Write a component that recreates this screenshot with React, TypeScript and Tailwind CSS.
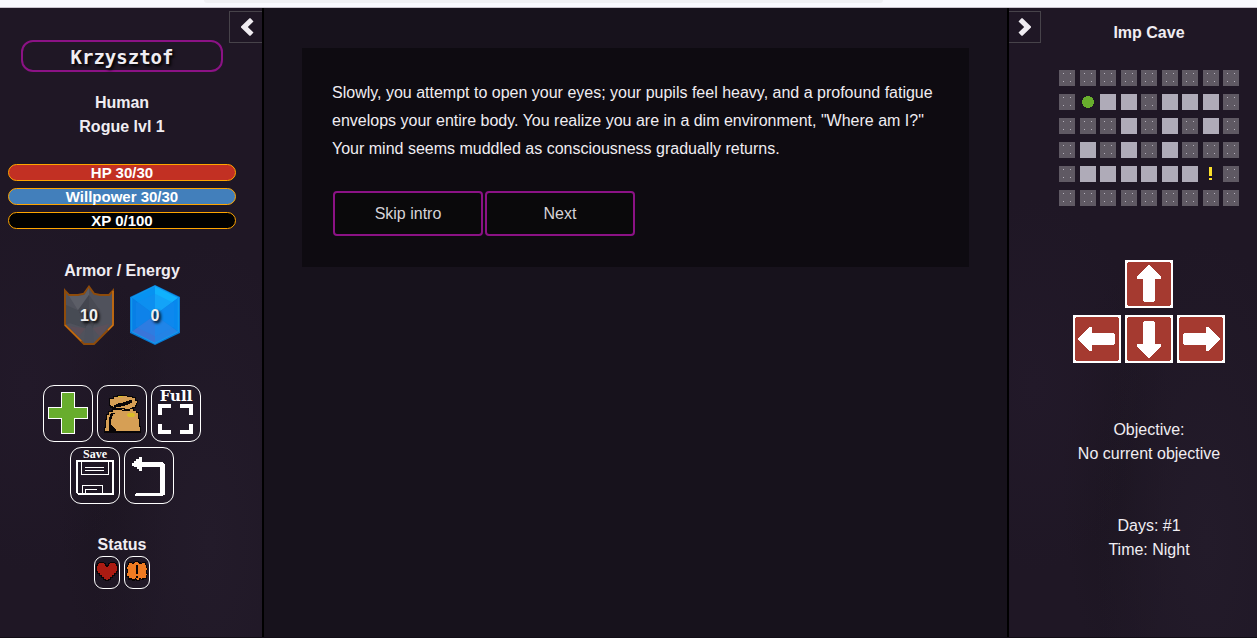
import React from "react";

const WALL = "#";
const FLOOR = ".";
const PLAYER = "@";
const EVENT = "!";

const MAP = [
  "#########",
  "#@..#...#",
  "###.#.#.#",
  "#.#.#.###",
  "#......!#",
  "#########",
];

const PANEL =
  "bg-[#1f1725] bg-[radial-gradient(ellipse_at_80%_85%,#231b2a_0%,transparent_40%),radial-gradient(ellipse_at_10%_60%,#221929_0%,transparent_35%),radial-gradient(ellipse_at_45%_75%,#1c1521_0%,transparent_30%)]";

function Tile({ kind }: { kind: string }) {
  return (
    <svg viewBox="0 0 16 16" className="size-4 shrink-0" aria-hidden="true" shapeRendering="crispEdges">
      {kind === WALL && (
        <>
          <rect width="16" height="16" fill="#5f5963" />
          <path d="M4 3h1v1h-1zM11 3h1v1h-1zM4 11h1v1h-1zM11 11h1v1h-1z" fill="#b5b1bb" />
        </>
      )}
      {kind === FLOOR && <rect width="16" height="16" fill="#afabb8" />}
      {kind === PLAYER && (
        <path d="M6 2h4v1h2v1h1v2h1v4h-1v2h-1v1h-2v1H6v-1H4v-1H3v-2H2V6h1V4h1V3h2z" fill="#68ad2d" />
      )}
      {kind === EVENT && <path d="M6.4 1h2.2v9H6.4zM6.4 12h2.2v2H6.4z" fill="#fbe02b" />}
    </svg>
  );
}

function StatBar({ text, fill }: { text: string; fill: string }) {
  return (
    <div
      className={`h-[17px] rounded-full border border-[#ffa500] text-center text-[15px] leading-4 font-bold text-white ${fill}`}
    >
      {text}
    </div>
  );
}

function ActionButton({ label, children }: { label: string; children: React.ReactNode }) {
  return (
    <button
      aria-label={label}
      className="h-[57px] w-[50px] cursor-pointer overflow-hidden rounded-[11px] border border-white"
    >
      <svg viewBox="3 3 144 165" className="h-[55px] w-12" shapeRendering="crispEdges">
        {children}
      </svg>
    </button>
  );
}

function MoveButton({ label, turn }: { label: string; turn: number }) {
  return (
    <button aria-label={label} className="size-12 cursor-pointer">
      <svg viewBox="0 0 48 48" className="size-12" shapeRendering="crispEdges">
        <rect width="48" height="48" fill="#fff" />
        <path d="M3 2h42v1h1v42h-1v1H3v-1H2V3h1z" fill="#a53a30" />
        <path
          d="M23 5h2v1h1v1h1v1h1v1h1v1h1v1h1v1h1v1h1v1h1v1h1v1h1v3h-6v22h-1v1H19v-1h-1V19h-6v-3h1v-1h1v-1h1v-1h1v-1h1v-1h1v-1h1V9h1V8h1V7h1V6h1z"
          fill="#fff"
          transform={`rotate(${turn} 24 24)`}
        />
      </svg>
    </button>
  );
}

function Shield() {
  return (
    <svg viewBox="0 0 150 180" className="absolute inset-0 h-[60px] w-[50px]" aria-hidden="true">
      <path
        d="M3 17 15 30H42L60 26 75 5 90 26 108 30H135L147 17V120L90 177H60L3 120Z"
        fill="#50525c"
        stroke="#8e4b0a"
        strokeWidth="6"
      />
      <path d="M75 8V30L42 76 15 33H44L62 29Z" fill="#5c5e67" />
      <path d="M75 30 42 76 64 130 75 112Z" fill="#44464f" />
      <path d="M75 30 108 76 86 130 75 112Z" fill="#494b54" />
      <path d="M6 60 42 76 64 130 18 115 6 118Z" fill="#474b54" />
      <path d="M64 130 44 156 14 124Z" fill="#5b4e58" />
      <path d="M86 130 108 156 136 116Z" fill="#5b505a" />
      <path d="M64 130 75 112 86 130 90 174H60Z" fill="#4d505b" />
      <path d="M147 18V120L132 135" fill="none" stroke="#d17516" strokeWidth="4" />
      <path d="M3 120 52 168" fill="none" stroke="#c56c12" strokeWidth="4" />
    </svg>
  );
}

function Crystal() {
  return (
    <svg viewBox="0 0 150 180" className="absolute inset-0 h-[60px] w-[50px]" aria-hidden="true">
      <path d="M75 0 150 36V144L75 180 0 144V36Z" fill="#0878d8" />
      <path d="M75 3 5 38 75 90Z" fill="#0792f1" />
      <path d="M75 3 145 38 75 90Z" fill="#10b1fd" />
      <path d="M5 38V140L75 90Z" fill="#087fe6" />
      <path d="M145 38V140L75 90Z" fill="#0788ee" />
      <path d="M5 140 75 175 75 90Z" fill="#3975da" />
      <path d="M145 140 75 175 75 90Z" fill="#2483e5" />
      <path d="M75 26 132 54V126L75 154 18 126V54Z" fill="#1989ee" opacity=".35" />
      <path d="M75 3 145 38V140L75 175 5 140V38Z" fill="none" stroke="#129eed" strokeWidth="3" />
    </svg>
  );
}

function Badge({ value, children }: { value: number; children: React.ReactNode }) {
  return (
    <div className="relative flex h-[60px] w-[50px] items-center justify-center pt-0.5">
      {children}
      <span className="relative font-bold text-[#f0f0f0] [text-shadow:2px_2px_3px_#000]">{value}</span>
    </div>
  );
}

function Chevron({ flip }: { flip?: boolean }) {
  return (
    <svg viewBox="0 0 16 20" className="h-5 w-4" aria-hidden="true">
      <path
        d={
          flip
            ? "M1.5 4.5 4.5 1.3 5.5 1.3 14 9.4V10.6L5.5 18.7H4.5L1.5 15.5 7.2 10Z"
            : "M15.5 4.5 12.5 1.3 11.5 1.3 3 9.4V10.6L11.5 18.7H12.5L15.5 15.5 9.8 10Z"
        }
        fill="#f0edf2"
      />
    </svg>
  );
}

function CharacterPanel() {
  return (
    <aside className={`flex w-[264px] shrink-0 items-start border-r-2 border-black ${PANEL}`}>
      <div className="relative w-[244px] shrink-0 pt-8 text-center">
        <h1 className="mx-[21px] h-8 rounded-xl border-2 border-[#8b1285] font-['DejaVu_Sans_Mono',monospace] text-[19px] leading-[30px] font-bold [text-shadow:2px_2px_3px_#000]">
          Krzysztof
        </h1>
        <div className="mt-[19px] font-bold">
          <p>Human</p>
          <p>Rogue lvl 1</p>
        </div>
        <div className="mx-2 mt-[25px] flex flex-col gap-[7px]">
          <StatBar text="HP 30/30" fill="bg-[#c23023]" />
          <StatBar text="Willpower 30/30" fill="bg-[#427fbb]" />
          <StatBar text="XP 0/100" fill="bg-black" />
        </div>
        <h2 className="mt-[30px] font-bold">Armor / Energy</h2>
        <div className="mt-0.5 flex justify-center gap-4">
          <Badge value={10}>
            <Shield />
          </Badge>
          <Badge value={0}>
            <Crystal />
          </Badge>
        </div>
        <div className="mx-auto mt-10 flex w-40 flex-wrap justify-center gap-x-1 gap-y-[5px]">
          <ActionButton label="Level up">
            <path d="M54 21H96V66H135V102H96V146H54V102H15V66H54Z" fill="#fff" />
            <path d="M57 24H93V69H132V99H93V143H57V99H18V69H57Z" fill="#68ad2d" />
          </ActionButton>
          <ActionButton label="Inventory">
            <path
              d="M48 33H60V30H90V33H108V36H117V45H123V54H120V63H117V69H111V75H114V78H120V81H126V99H129V123H132V144H21V126H24V102H27V87H33V78H42V75H45V69H39V63H36V39H48Z"
              fill="#080507"
            />
            <path
              d="M51 36H63V33H90V36H105V39H114V48H120V54H117V60H114V66H105V69H99V72H84V69H57V66H48V63H42V60H39V42H51Z"
              fill="#d69f55"
            />
            <path
              d="M48 72H81V75H99V72H108V78H117V84H123V102H126V126H129V138H57V135H54V132H51V129H48V126H45V120H42V102H45V93H48V87H54V84H42V87H39V96H36V138H24V129H27V105H30V90H36V81H48Z"
              fill="#d69f55"
            />
            <path d="M36 138V96H39V87H45V84H54V87H48V93H45V102H42V120H45V123H48V126H51V129H54V132H57V138Z" fill="#080507" />
            <path d="M48 69H57V72H75V75H99V78H75V75H48Z" fill="#080507" />
            <path d="M51 60H57V57H63V54H78V51H87V48H96V45H105V54H99V57H93V60H84V63H72V66H51Z" fill="#080507" />
            <path d="M63 33H78V36H63ZM93 84H111V87H114V93H111V96H93V93H90V87H93Z" fill="#d9bd28" />
          </ActionButton>
          <ActionButton label="Full screen">
            <text
              x="75"
              y="47"
              fill="#fff"
              fontSize="45"
              fontWeight="700"
              fontFamily="DejaVu Serif, serif"
              textAnchor="middle"
            >
              Full
            </text>
            <path
              d="M21 57H60V69H33V90H21ZM87 57H126V90H114V69H87ZM21 117H33V135H60V147H21ZM114 117H126V147H87V135H114Z"
              fill="#fff"
            />
          </ActionButton>
          <ActionButton label="Save">
            <text
              x="75"
              y="33"
              fill="#fff"
              fontSize="36"
              fontWeight="700"
              fontFamily="Liberation Serif, serif"
              textAnchor="middle"
            >
              Save
            </text>
            <path
              d="M18 39H132V144H24V141H21V138H18ZM24 45V138H126V45Z"
              fill="#fff"
              fillRule="evenodd"
            />
            <path
              d="M34 45V82H115V45M46 61H103M46 69H103M37 138V115H97V138M46 138V127H82"
              fill="none"
              stroke="#fff"
              strokeWidth="3"
            />
          </ActionButton>
          <ActionButton label="Back">
            <path
              d="M45 30H54V45H117V48H120V51H123V144H117V147H33V141H36V138H108V60H54V72H45V66H39V60H30V57H24V48H30V42H36V36H45Z"
              fill="#fff"
            />
          </ActionButton>
        </div>
        <h2 className="mt-[29px] h-[23px] font-bold">Status</h2>
        <div className="flex justify-center gap-1">
          <button aria-label="Health" className="h-[33px] w-[26px] cursor-pointer rounded-[9px] border border-white">
            <svg viewBox="0 0 24 31" className="h-[31px] w-6" shapeRendering="crispEdges">
              <path
                d="M4 5h5v1h2v2h2V6h2V5h5v1h2v2h1v7h-1v2h-2v2h-2v2h-2v2h-2v1h-4v-1H8v-2H6v-2H4v-2H2v-2H1V8h1V6h2z"
                fill="#080507"
              />
              <path
                d="M4 6h5v1h1v2h1v1h2V9h1V7h1V6h5v1h1v2h1v5h-1v2h-2v2h-2v2h-2v2h-2v1h-2v-1H9v-2H7v-2H5v-2H3v-2H2V9h1V7h1z"
                fill="#aa1b12"
              />
            </svg>
          </button>
          <button aria-label="Alert" className="h-[33px] w-[26px] cursor-pointer rounded-[9px] border border-white">
            <svg viewBox="0 0 24 31" className="h-[31px] w-6" shapeRendering="crispEdges">
              <path
                d="M3 5h4v1h1V5h2V4h4v1h2v1h1V5h4v3h1v3h1v2h-1v3h1v2h-1v4h-3v1h-3v-1h-1v2h-4v-1h-1v1H7v-1H3v-3H1v-4h1v-3H1v-3h1V8h1z"
                fill="#080507"
              />
              <path
                d="M4 6h3v1h2V6h1V5h3v1h1v1h3V6h3v2h1v3h1v2h-1v4h1v1h-1v3h-4v1h-1v-1h-2v2h-2v-1h-1v-1h-1v1H7v-1H4v-2H2v-3h1v-4H2v-2h1V8h1z"
                fill="#ef7b22"
              />
              <path d="M11 8h2v9h-2zM11 19h2v2h-2z" fill="#080507" />
            </svg>
          </button>
        </div>
      </div>
      <button
        aria-label="Collapse character panel"
        className="mt-[3px] -ml-[15px] flex h-8 w-[33px] shrink-0 cursor-pointer items-center justify-center border border-r-0 border-[#47434a]"
      >
        <Chevron />
      </button>
    </aside>
  );
}

function WorldPanel() {
  return (
    <aside className={`flex w-[250px] shrink-0 items-start border-l-2 border-black ${PANEL}`}>
      <button
        aria-label="Collapse world panel"
        className="mt-[3px] flex h-8 w-8 shrink-0 cursor-pointer items-center justify-center border border-l-0 border-[#47434a]"
      >
        <Chevron flip />
      </button>
      <div className="flex-1 pt-[13px] text-center">
        <h2 className="font-bold">Imp Cave</h2>
        <div className="mx-auto mt-[25px] flex w-[180px] flex-col gap-2">
          {MAP.map((row, y) => (
            <div key={y} className="flex justify-between">
              {row.split("").map((kind, x) => (
                <Tile key={x} kind={kind} />
              ))}
            </div>
          ))}
        </div>
        <div className="mt-[54px] flex flex-col items-center gap-[7px]">
          <MoveButton label="Go up" turn={0} />
          <div className="flex gap-1">
            <MoveButton label="Go left" turn={270} />
            <MoveButton label="Go down" turn={180} />
            <MoveButton label="Go right" turn={90} />
          </div>
        </div>
        <div className="mt-[55px]">
          <p>Objective:</p>
          <p>No current objective</p>
        </div>
        <div className="mt-12">
          <p>Days: #1</p>
          <p>Time: Night</p>
        </div>
      </div>
    </aside>
  );
}

export default function App() {
  return (
    <div className="flex min-h-screen flex-col bg-[#17121c] font-['Liberation_Sans',Arial,sans-serif] text-base leading-6 text-[#f0edf2]">
      <div className="h-2 shrink-0 border-b border-[#c9c4ce] bg-[#f9f9fe]">
        <div className="ml-[204px] h-[3px] w-[54%] rounded-b bg-[#f0f0f4]" />
      </div>
      <div className="flex flex-1 border-b border-[#120d16]">
        <CharacterPanel />
        <main className="min-w-0 flex-1 px-[38px] pt-10">
          <section className="bg-[#0e0b11] px-[30px] py-[31px]">
            <p className="leading-7">
              Slowly, you attempt to open your eyes; your pupils feel heavy, and a profound fatigue envelops your
              entire body. You realize you are in a dim environment, "Where am I?" Your mind seems muddled as
              consciousness gradually returns.
            </p>
            <div className="mt-7 ml-px flex gap-0.5">
              <button className="h-[45px] w-[150px] cursor-pointer rounded-[4px] border-2 border-[#8b1285] bg-[#0a090b] text-[#d6d3d8]">
                Skip intro
              </button>
              <button className="h-[45px] w-[150px] cursor-pointer rounded-[4px] border-2 border-[#8b1285] bg-[#0a090b] text-[#d6d3d8]">
                Next
              </button>
            </div>
          </section>
        </main>
        <WorldPanel />
      </div>
    </div>
  );
}
